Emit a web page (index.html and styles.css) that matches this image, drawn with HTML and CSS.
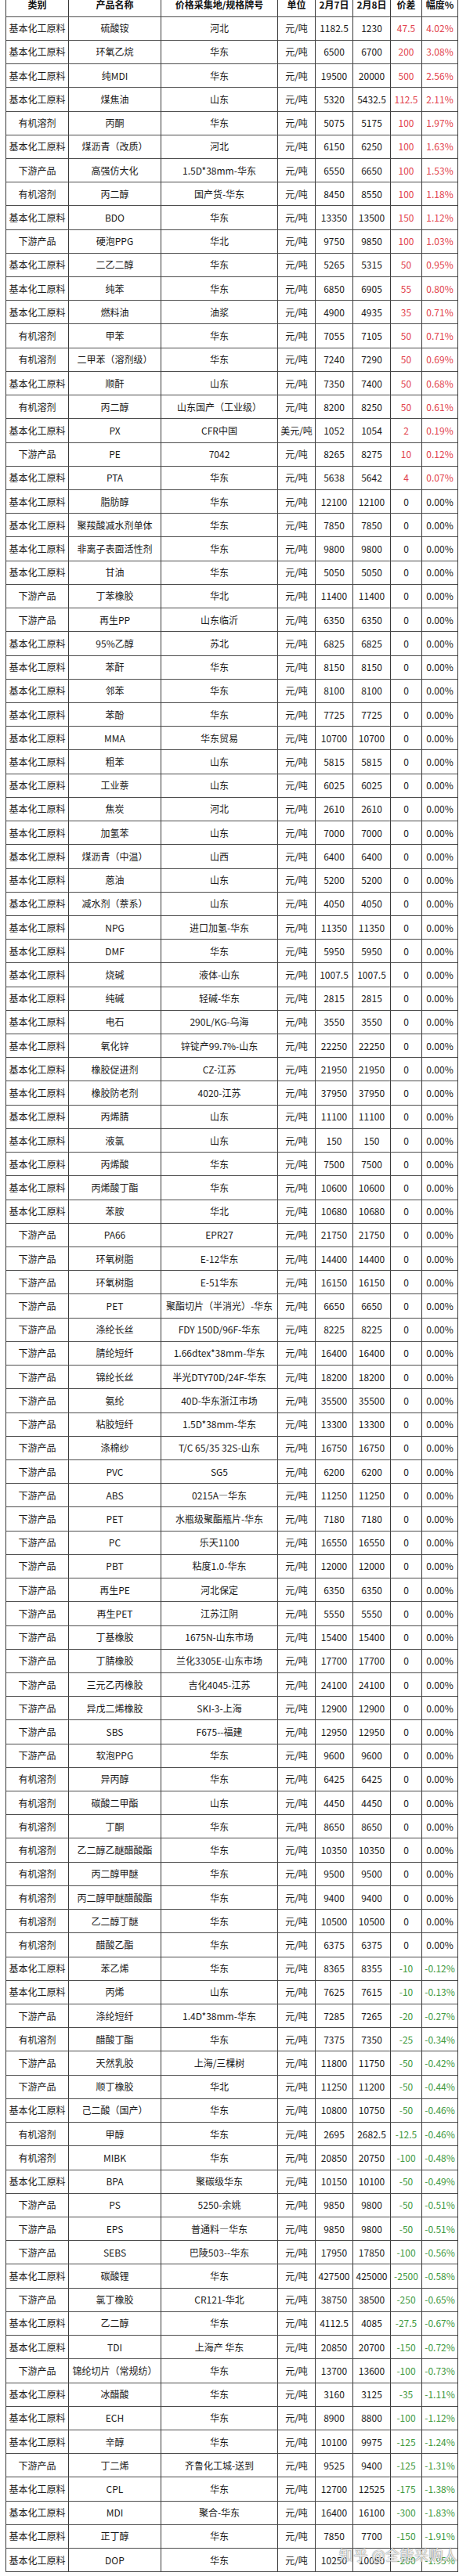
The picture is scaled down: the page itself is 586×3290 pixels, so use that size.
FILE: index.html
```html
<!DOCTYPE html>
<html lang="zh-CN">
<head>
<meta charset="utf-8">
<title>化工产品价格涨跌表</title>
<link rel="stylesheet" href="styles.css">
</head>
<body>
<div class="sheet">
<table class="grid">
<colgroup>
<col class="c-cat"><col class="c-name"><col class="c-spec"><col class="c-unit"><col class="c-d1"><col class="c-d2"><col class="c-diff"><col class="c-pct">
</colgroup>
<thead>
<tr><th>类别</th><th>产品名称</th><th>价格采集地/规格牌号</th><th>单位</th><th>2月7日</th><th>2月8日</th><th>价差</th><th>幅度%</th></tr>
</thead>
<tbody>
<tr><td>基本化工原料</td><td>硫酸铵</td><td>河北</td><td>元/吨</td><td>1182.5</td><td>1230</td><td class="up">47.5</td><td class="up">4.02%</td></tr>
<tr><td>基本化工原料</td><td>环氧乙烷</td><td>华东</td><td>元/吨</td><td>6500</td><td>6700</td><td class="up">200</td><td class="up">3.08%</td></tr>
<tr><td>基本化工原料</td><td>纯MDI</td><td>华东</td><td>元/吨</td><td>19500</td><td>20000</td><td class="up">500</td><td class="up">2.56%</td></tr>
<tr><td>基本化工原料</td><td>煤焦油</td><td>山东</td><td>元/吨</td><td>5320</td><td>5432.5</td><td class="up">112.5</td><td class="up">2.11%</td></tr>
<tr><td>有机溶剂</td><td>丙酮</td><td>华东</td><td>元/吨</td><td>5075</td><td>5175</td><td class="up">100</td><td class="up">1.97%</td></tr>
<tr><td>基本化工原料</td><td>煤沥青（改质）</td><td>河北</td><td>元/吨</td><td>6150</td><td>6250</td><td class="up">100</td><td class="up">1.63%</td></tr>
<tr><td>下游产品</td><td>高强仿大化</td><td>1.5D*38mm-华东</td><td>元/吨</td><td>6550</td><td>6650</td><td class="up">100</td><td class="up">1.53%</td></tr>
<tr><td>有机溶剂</td><td>丙二醇</td><td>国产货-华东</td><td>元/吨</td><td>8450</td><td>8550</td><td class="up">100</td><td class="up">1.18%</td></tr>
<tr><td>基本化工原料</td><td>BDO</td><td>华东</td><td>元/吨</td><td>13350</td><td>13500</td><td class="up">150</td><td class="up">1.12%</td></tr>
<tr><td>下游产品</td><td>硬泡PPG</td><td>华北</td><td>元/吨</td><td>9750</td><td>9850</td><td class="up">100</td><td class="up">1.03%</td></tr>
<tr><td>基本化工原料</td><td>二乙二醇</td><td>华东</td><td>元/吨</td><td>5265</td><td>5315</td><td class="up">50</td><td class="up">0.95%</td></tr>
<tr><td>基本化工原料</td><td>纯苯</td><td>华东</td><td>元/吨</td><td>6850</td><td>6905</td><td class="up">55</td><td class="up">0.80%</td></tr>
<tr><td>基本化工原料</td><td>燃料油</td><td>油浆</td><td>元/吨</td><td>4900</td><td>4935</td><td class="up">35</td><td class="up">0.71%</td></tr>
<tr><td>有机溶剂</td><td>甲苯</td><td>华东</td><td>元/吨</td><td>7055</td><td>7105</td><td class="up">50</td><td class="up">0.71%</td></tr>
<tr><td>有机溶剂</td><td>二甲苯（溶剂级）</td><td>华东</td><td>元/吨</td><td>7240</td><td>7290</td><td class="up">50</td><td class="up">0.69%</td></tr>
<tr><td>基本化工原料</td><td>顺酐</td><td>山东</td><td>元/吨</td><td>7350</td><td>7400</td><td class="up">50</td><td class="up">0.68%</td></tr>
<tr><td>有机溶剂</td><td>丙二醇</td><td>山东国产（工业级）</td><td>元/吨</td><td>8200</td><td>8250</td><td class="up">50</td><td class="up">0.61%</td></tr>
<tr><td>基本化工原料</td><td>PX</td><td>CFR中国</td><td>美元/吨</td><td>1052</td><td>1054</td><td class="up">2</td><td class="up">0.19%</td></tr>
<tr><td>下游产品</td><td>PE</td><td>7042</td><td>元/吨</td><td>8265</td><td>8275</td><td class="up">10</td><td class="up">0.12%</td></tr>
<tr><td>基本化工原料</td><td>PTA</td><td>华东</td><td>元/吨</td><td>5638</td><td>5642</td><td class="up">4</td><td class="up">0.07%</td></tr>
<tr><td>基本化工原料</td><td>脂肪醇</td><td>华东</td><td>元/吨</td><td>12100</td><td>12100</td><td>0</td><td>0.00%</td></tr>
<tr><td>基本化工原料</td><td>聚羧酸减水剂单体</td><td>华东</td><td>元/吨</td><td>7850</td><td>7850</td><td>0</td><td>0.00%</td></tr>
<tr><td>基本化工原料</td><td>非离子表面活性剂</td><td>华东</td><td>元/吨</td><td>9800</td><td>9800</td><td>0</td><td>0.00%</td></tr>
<tr><td>基本化工原料</td><td>甘油</td><td>华东</td><td>元/吨</td><td>5050</td><td>5050</td><td>0</td><td>0.00%</td></tr>
<tr><td>下游产品</td><td>丁苯橡胶</td><td>华北</td><td>元/吨</td><td>11400</td><td>11400</td><td>0</td><td>0.00%</td></tr>
<tr><td>下游产品</td><td>再生PP</td><td>山东临沂</td><td>元/吨</td><td>6350</td><td>6350</td><td>0</td><td>0.00%</td></tr>
<tr><td>基本化工原料</td><td>95%乙醇</td><td>苏北</td><td>元/吨</td><td>6825</td><td>6825</td><td>0</td><td>0.00%</td></tr>
<tr><td>基本化工原料</td><td>苯酐</td><td>华东</td><td>元/吨</td><td>8150</td><td>8150</td><td>0</td><td>0.00%</td></tr>
<tr><td>基本化工原料</td><td>邻苯</td><td>华东</td><td>元/吨</td><td>8100</td><td>8100</td><td>0</td><td>0.00%</td></tr>
<tr><td>基本化工原料</td><td>苯酚</td><td>华东</td><td>元/吨</td><td>7725</td><td>7725</td><td>0</td><td>0.00%</td></tr>
<tr><td>基本化工原料</td><td>MMA</td><td>华东贸易</td><td>元/吨</td><td>10700</td><td>10700</td><td>0</td><td>0.00%</td></tr>
<tr><td>基本化工原料</td><td>粗苯</td><td>山东</td><td>元/吨</td><td>5815</td><td>5815</td><td>0</td><td>0.00%</td></tr>
<tr><td>基本化工原料</td><td>工业萘</td><td>山东</td><td>元/吨</td><td>6025</td><td>6025</td><td>0</td><td>0.00%</td></tr>
<tr><td>基本化工原料</td><td>焦炭</td><td>河北</td><td>元/吨</td><td>2610</td><td>2610</td><td>0</td><td>0.00%</td></tr>
<tr><td>基本化工原料</td><td>加氢苯</td><td>山东</td><td>元/吨</td><td>7000</td><td>7000</td><td>0</td><td>0.00%</td></tr>
<tr><td>基本化工原料</td><td>煤沥青（中温）</td><td>山西</td><td>元/吨</td><td>6400</td><td>6400</td><td>0</td><td>0.00%</td></tr>
<tr><td>基本化工原料</td><td>蒽油</td><td>山东</td><td>元/吨</td><td>5200</td><td>5200</td><td>0</td><td>0.00%</td></tr>
<tr><td>基本化工原料</td><td>减水剂（萘系）</td><td>山东</td><td>元/吨</td><td>4050</td><td>4050</td><td>0</td><td>0.00%</td></tr>
<tr><td>基本化工原料</td><td>NPG</td><td>进口加氢-华东</td><td>元/吨</td><td>11350</td><td>11350</td><td>0</td><td>0.00%</td></tr>
<tr><td>基本化工原料</td><td>DMF</td><td>华东</td><td>元/吨</td><td>5950</td><td>5950</td><td>0</td><td>0.00%</td></tr>
<tr><td>基本化工原料</td><td>烧碱</td><td>液体-山东</td><td>元/吨</td><td>1007.5</td><td>1007.5</td><td>0</td><td>0.00%</td></tr>
<tr><td>基本化工原料</td><td>纯碱</td><td>轻碱-华东</td><td>元/吨</td><td>2815</td><td>2815</td><td>0</td><td>0.00%</td></tr>
<tr><td>基本化工原料</td><td>电石</td><td>290L/KG-乌海</td><td>元/吨</td><td>3550</td><td>3550</td><td>0</td><td>0.00%</td></tr>
<tr><td>基本化工原料</td><td>氧化锌</td><td>锌锭产99.7%-山东</td><td>元/吨</td><td>22250</td><td>22250</td><td>0</td><td>0.00%</td></tr>
<tr><td>基本化工原料</td><td>橡胶促进剂</td><td>CZ-江苏</td><td>元/吨</td><td>21950</td><td>21950</td><td>0</td><td>0.00%</td></tr>
<tr><td>基本化工原料</td><td>橡胶防老剂</td><td>4020-江苏</td><td>元/吨</td><td>37950</td><td>37950</td><td>0</td><td>0.00%</td></tr>
<tr><td>基本化工原料</td><td>丙烯腈</td><td>山东</td><td>元/吨</td><td>11100</td><td>11100</td><td>0</td><td>0.00%</td></tr>
<tr><td>基本化工原料</td><td>液氯</td><td>山东</td><td>元/吨</td><td>150</td><td>150</td><td>0</td><td>0.00%</td></tr>
<tr><td>基本化工原料</td><td>丙烯酸</td><td>华东</td><td>元/吨</td><td>7500</td><td>7500</td><td>0</td><td>0.00%</td></tr>
<tr><td>基本化工原料</td><td>丙烯酸丁酯</td><td>华东</td><td>元/吨</td><td>10600</td><td>10600</td><td>0</td><td>0.00%</td></tr>
<tr><td>基本化工原料</td><td>苯胺</td><td>华北</td><td>元/吨</td><td>10680</td><td>10680</td><td>0</td><td>0.00%</td></tr>
<tr><td>下游产品</td><td>PA66</td><td>EPR27</td><td>元/吨</td><td>21750</td><td>21750</td><td>0</td><td>0.00%</td></tr>
<tr><td>下游产品</td><td>环氧树脂</td><td>E-12华东</td><td>元/吨</td><td>14400</td><td>14400</td><td>0</td><td>0.00%</td></tr>
<tr><td>下游产品</td><td>环氧树脂</td><td>E-51华东</td><td>元/吨</td><td>16150</td><td>16150</td><td>0</td><td>0.00%</td></tr>
<tr><td>下游产品</td><td>PET</td><td>聚酯切片（半消光）-华东</td><td>元/吨</td><td>6650</td><td>6650</td><td>0</td><td>0.00%</td></tr>
<tr><td>下游产品</td><td>涤纶长丝</td><td>FDY 150D/96F-华东</td><td>元/吨</td><td>8225</td><td>8225</td><td>0</td><td>0.00%</td></tr>
<tr><td>下游产品</td><td>腈纶短纤</td><td>1.66dtex*38mm-华东</td><td>元/吨</td><td>16400</td><td>16400</td><td>0</td><td>0.00%</td></tr>
<tr><td>下游产品</td><td>锦纶长丝</td><td>半光DTY70D/24F-华东</td><td>元/吨</td><td>18200</td><td>18200</td><td>0</td><td>0.00%</td></tr>
<tr><td>下游产品</td><td>氨纶</td><td>40D-华东浙江市场</td><td>元/吨</td><td>35500</td><td>35500</td><td>0</td><td>0.00%</td></tr>
<tr><td>下游产品</td><td>粘胶短纤</td><td>1.5D*38mm-华东</td><td>元/吨</td><td>13300</td><td>13300</td><td>0</td><td>0.00%</td></tr>
<tr><td>下游产品</td><td>涤棉纱</td><td>T/C 65/35 32S-山东</td><td>元/吨</td><td>16750</td><td>16750</td><td>0</td><td>0.00%</td></tr>
<tr><td>下游产品</td><td>PVC</td><td>SG5</td><td>元/吨</td><td>6200</td><td>6200</td><td>0</td><td>0.00%</td></tr>
<tr><td>下游产品</td><td>ABS</td><td>0215A—华东</td><td>元/吨</td><td>11250</td><td>11250</td><td>0</td><td>0.00%</td></tr>
<tr><td>下游产品</td><td>PET</td><td>水瓶级聚酯瓶片-华东</td><td>元/吨</td><td>7180</td><td>7180</td><td>0</td><td>0.00%</td></tr>
<tr><td>下游产品</td><td>PC</td><td>乐天1100</td><td>元/吨</td><td>16550</td><td>16550</td><td>0</td><td>0.00%</td></tr>
<tr><td>下游产品</td><td>PBT</td><td>粘度1.0-华东</td><td>元/吨</td><td>12000</td><td>12000</td><td>0</td><td>0.00%</td></tr>
<tr><td>下游产品</td><td>再生PE</td><td>河北保定</td><td>元/吨</td><td>6350</td><td>6350</td><td>0</td><td>0.00%</td></tr>
<tr><td>下游产品</td><td>再生PET</td><td>江苏江阴</td><td>元/吨</td><td>5550</td><td>5550</td><td>0</td><td>0.00%</td></tr>
<tr><td>下游产品</td><td>丁基橡胶</td><td>1675N-山东市场</td><td>元/吨</td><td>15400</td><td>15400</td><td>0</td><td>0.00%</td></tr>
<tr><td>下游产品</td><td>丁腈橡胶</td><td>兰化3305E-山东市场</td><td>元/吨</td><td>17700</td><td>17700</td><td>0</td><td>0.00%</td></tr>
<tr><td>下游产品</td><td>三元乙丙橡胶</td><td>吉化4045-江苏</td><td>元/吨</td><td>24100</td><td>24100</td><td>0</td><td>0.00%</td></tr>
<tr><td>下游产品</td><td>异戊二烯橡胶</td><td>SKI-3-上海</td><td>元/吨</td><td>12900</td><td>12900</td><td>0</td><td>0.00%</td></tr>
<tr><td>下游产品</td><td>SBS</td><td>F675--福建</td><td>元/吨</td><td>12950</td><td>12950</td><td>0</td><td>0.00%</td></tr>
<tr><td>下游产品</td><td>软泡PPG</td><td>华东</td><td>元/吨</td><td>9600</td><td>9600</td><td>0</td><td>0.00%</td></tr>
<tr><td>有机溶剂</td><td>异丙醇</td><td>华东</td><td>元/吨</td><td>6425</td><td>6425</td><td>0</td><td>0.00%</td></tr>
<tr><td>有机溶剂</td><td>碳酸二甲酯</td><td>山东</td><td>元/吨</td><td>4450</td><td>4450</td><td>0</td><td>0.00%</td></tr>
<tr><td>有机溶剂</td><td>丁酮</td><td>华东</td><td>元/吨</td><td>8650</td><td>8650</td><td>0</td><td>0.00%</td></tr>
<tr><td>有机溶剂</td><td>乙二醇乙醚醋酸酯</td><td>华东</td><td>元/吨</td><td>10350</td><td>10350</td><td>0</td><td>0.00%</td></tr>
<tr><td>有机溶剂</td><td>丙二醇甲醚</td><td>华东</td><td>元/吨</td><td>9500</td><td>9500</td><td>0</td><td>0.00%</td></tr>
<tr><td>有机溶剂</td><td>丙二醇甲醚醋酸酯</td><td>华东</td><td>元/吨</td><td>9400</td><td>9400</td><td>0</td><td>0.00%</td></tr>
<tr><td>有机溶剂</td><td>乙二醇丁醚</td><td>华东</td><td>元/吨</td><td>10500</td><td>10500</td><td>0</td><td>0.00%</td></tr>
<tr><td>有机溶剂</td><td>醋酸乙酯</td><td>华东</td><td>元/吨</td><td>6375</td><td>6375</td><td>0</td><td>0.00%</td></tr>
<tr><td>基本化工原料</td><td>苯乙烯</td><td>华东</td><td>元/吨</td><td>8365</td><td>8355</td><td class="dn">-10</td><td class="dn">-0.12%</td></tr>
<tr><td>基本化工原料</td><td>丙烯</td><td>山东</td><td>元/吨</td><td>7625</td><td>7615</td><td class="dn">-10</td><td class="dn">-0.13%</td></tr>
<tr><td>下游产品</td><td>涤纶短纤</td><td>1.4D*38mm-华东</td><td>元/吨</td><td>7285</td><td>7265</td><td class="dn">-20</td><td class="dn">-0.27%</td></tr>
<tr><td>有机溶剂</td><td>醋酸丁酯</td><td>华东</td><td>元/吨</td><td>7375</td><td>7350</td><td class="dn">-25</td><td class="dn">-0.34%</td></tr>
<tr><td>下游产品</td><td>天然乳胶</td><td>上海/三棵树</td><td>元/吨</td><td>11800</td><td>11750</td><td class="dn">-50</td><td class="dn">-0.42%</td></tr>
<tr><td>下游产品</td><td>顺丁橡胶</td><td>华北</td><td>元/吨</td><td>11250</td><td>11200</td><td class="dn">-50</td><td class="dn">-0.44%</td></tr>
<tr><td>基本化工原料</td><td>己二酸（国产）</td><td>华东</td><td>元/吨</td><td>10800</td><td>10750</td><td class="dn">-50</td><td class="dn">-0.46%</td></tr>
<tr><td>有机溶剂</td><td>甲醇</td><td>华东</td><td>元/吨</td><td>2695</td><td>2682.5</td><td class="dn">-12.5</td><td class="dn">-0.46%</td></tr>
<tr><td>有机溶剂</td><td>MIBK</td><td>华东</td><td>元/吨</td><td>20850</td><td>20750</td><td class="dn">-100</td><td class="dn">-0.48%</td></tr>
<tr><td>基本化工原料</td><td>BPA</td><td>聚碳级华东</td><td>元/吨</td><td>10150</td><td>10100</td><td class="dn">-50</td><td class="dn">-0.49%</td></tr>
<tr><td>下游产品</td><td>PS</td><td>5250-余姚</td><td>元/吨</td><td>9850</td><td>9800</td><td class="dn">-50</td><td class="dn">-0.51%</td></tr>
<tr><td>下游产品</td><td>EPS</td><td>普通料—华东</td><td>元/吨</td><td>9850</td><td>9800</td><td class="dn">-50</td><td class="dn">-0.51%</td></tr>
<tr><td>下游产品</td><td>SEBS</td><td>巴陵503--华东</td><td>元/吨</td><td>17950</td><td>17850</td><td class="dn">-100</td><td class="dn">-0.56%</td></tr>
<tr><td>基本化工原料</td><td>碳酸锂</td><td>华东</td><td>元/吨</td><td>427500</td><td>425000</td><td class="dn">-2500</td><td class="dn">-0.58%</td></tr>
<tr><td>下游产品</td><td>氯丁橡胶</td><td>CR121-华北</td><td>元/吨</td><td>38750</td><td>38500</td><td class="dn">-250</td><td class="dn">-0.65%</td></tr>
<tr><td>基本化工原料</td><td>乙二醇</td><td>华东</td><td>元/吨</td><td>4112.5</td><td>4085</td><td class="dn">-27.5</td><td class="dn">-0.67%</td></tr>
<tr><td>基本化工原料</td><td>TDI</td><td>上海产 华东</td><td>元/吨</td><td>20850</td><td>20700</td><td class="dn">-150</td><td class="dn">-0.72%</td></tr>
<tr><td>下游产品</td><td>锦纶切片（常规纺）</td><td>华东</td><td>元/吨</td><td>13700</td><td>13600</td><td class="dn">-100</td><td class="dn">-0.73%</td></tr>
<tr><td>基本化工原料</td><td>冰醋酸</td><td>华东</td><td>元/吨</td><td>3160</td><td>3125</td><td class="dn">-35</td><td class="dn">-1.11%</td></tr>
<tr><td>基本化工原料</td><td>ECH</td><td>华东</td><td>元/吨</td><td>8900</td><td>8800</td><td class="dn">-100</td><td class="dn">-1.12%</td></tr>
<tr><td>基本化工原料</td><td>辛醇</td><td>华东</td><td>元/吨</td><td>10100</td><td>9975</td><td class="dn">-125</td><td class="dn">-1.24%</td></tr>
<tr><td>下游产品</td><td>丁二烯</td><td>齐鲁化工城-送到</td><td>元/吨</td><td>9525</td><td>9400</td><td class="dn">-125</td><td class="dn">-1.31%</td></tr>
<tr><td>基本化工原料</td><td>CPL</td><td>华东</td><td>元/吨</td><td>12700</td><td>12525</td><td class="dn">-175</td><td class="dn">-1.38%</td></tr>
<tr><td>基本化工原料</td><td>MDI</td><td>聚合-华东</td><td>元/吨</td><td>16400</td><td>16100</td><td class="dn">-300</td><td class="dn">-1.83%</td></tr>
<tr><td>基本化工原料</td><td>正丁醇</td><td>华东</td><td>元/吨</td><td>7850</td><td>7700</td><td class="dn">-150</td><td class="dn">-1.91%</td></tr>
<tr><td>基本化工原料</td><td>DOP</td><td>华东</td><td>元/吨</td><td>10250</td><td>10050</td><td class="dn">-200</td><td class="dn">-1.95%</td></tr>
</tbody>
</table>
<div class="mark">知乎 @全能采购人</div>
</div>
</body>
</html>
```

FILE: styles.css
```css
html, body {
  margin: 0;
  padding: 0;
  background: #ffffff;
}

.sheet {
  position: relative;
  width: 578px;
  margin-left: 7px;
}

.grid {
  border-collapse: separate;
  border-spacing: 0;
  table-layout: fixed;
  width: 578px;
  margin-top: -9.6px;
  font-family: "Noto Sans CJK SC", "Noto Sans", sans-serif;
  font-size: 12px;
  color: #1a1a1a;
  border-right: 1px solid #3a3a3a;
  border-bottom: 1px solid #4a4a4a;
}

.c-cat { width: 80px; }
.c-name { width: 118px; }
.c-spec { width: 149px; }
.c-unit { width: 48px; }
.c-d1 { width: 48px; }
.c-d2 { width: 48px; }
.c-diff { width: 40px; }
.c-pct { width: 46px; }

.grid tr {
  height: 30.22px;
}

.grid th,
.grid td {
  padding: 0;
  border-top: 1px solid #4e4e4e;
  border-left: 1px solid #3a3a3a;
  text-align: center;
  vertical-align: middle;
  white-space: nowrap;
  overflow: hidden;
  line-height: 16px;
}

.grid th {
  font-weight: 700;
  color: #111111;
}

.grid td.up {
  color: #e2444e;
}

.grid td.dn {
  color: #3f9a3f;
}

.mark {
  position: absolute;
  left: 426px;
  bottom: 12px;
  font-family: "Noto Sans CJK SC", sans-serif;
  font-size: 18px;
  line-height: 22px;
  letter-spacing: 0.5px;
  color: rgba(255, 255, 255, 0.88);
  text-shadow: 0 0 1px rgba(80, 80, 80, 0.9), 0 0 2px rgba(120, 120, 120, 0.6);
  white-space: nowrap;
}
```
